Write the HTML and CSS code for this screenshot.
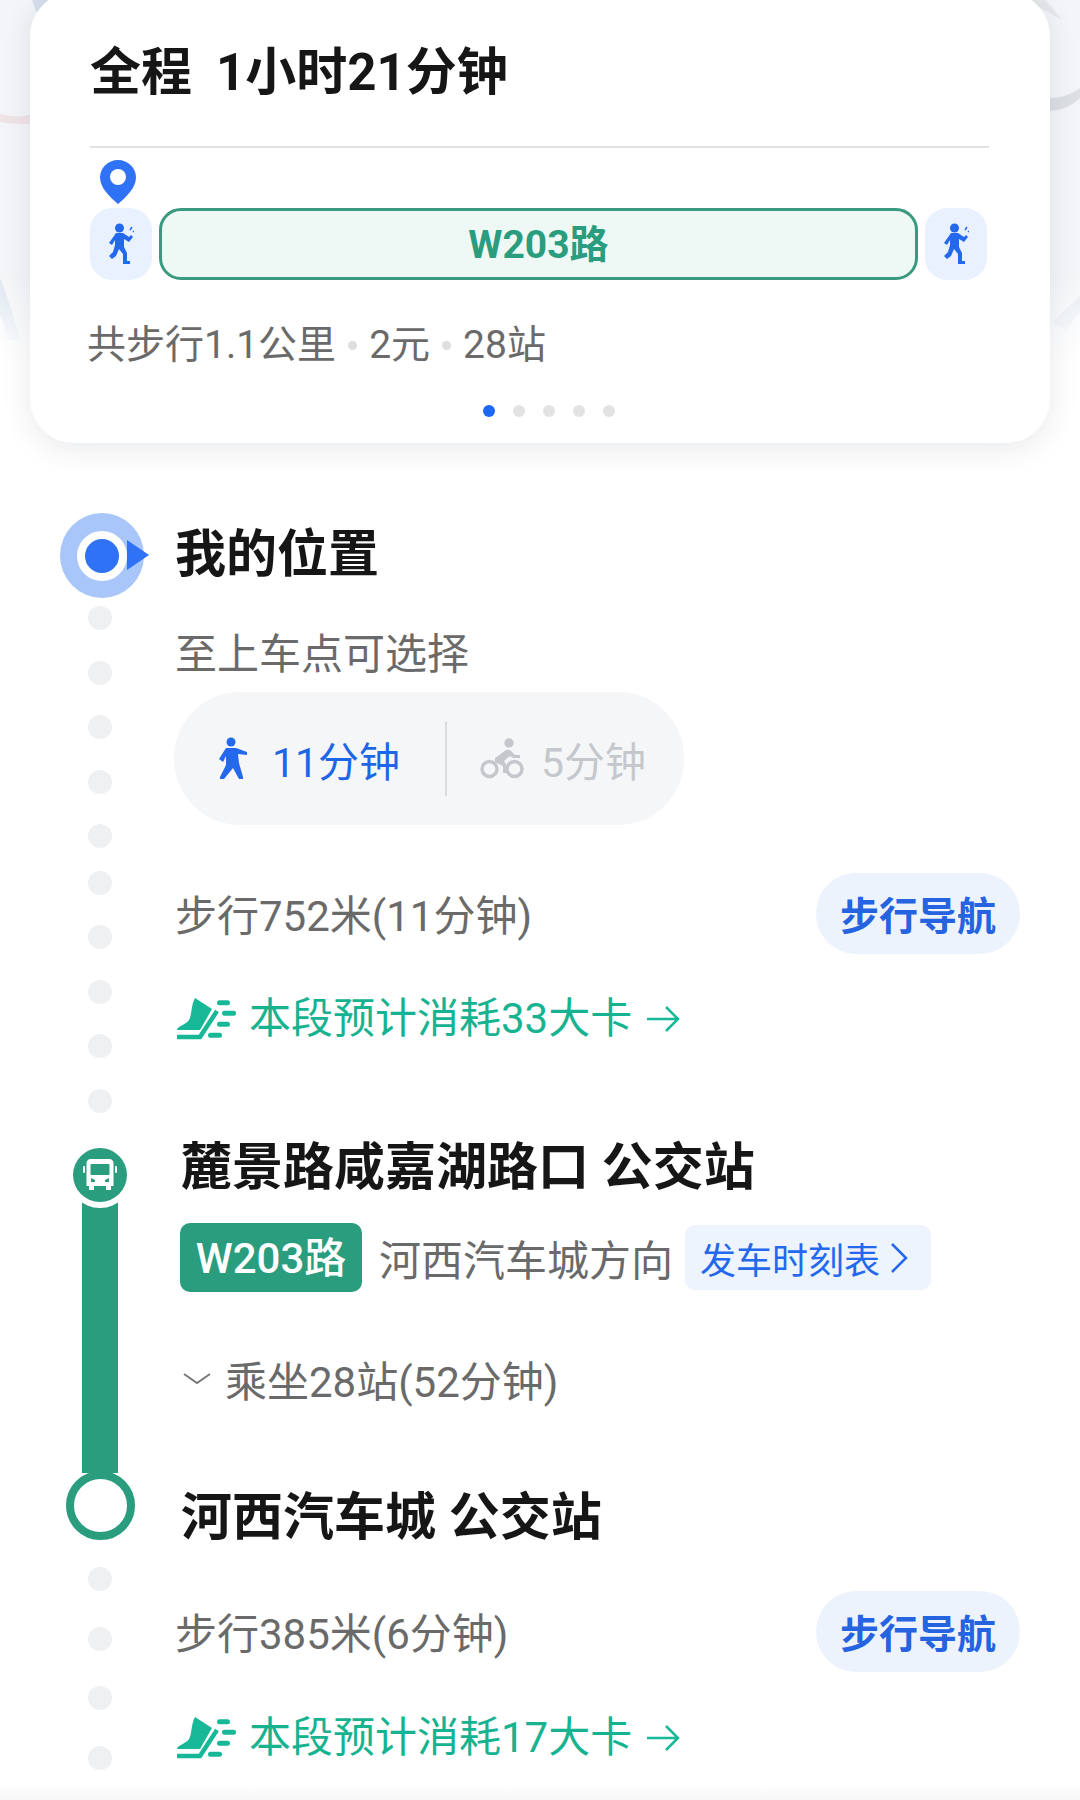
FILE: index.html
```html
<!DOCTYPE html>
<html lang="zh-CN">
<head>
  <meta charset="UTF-8">
  <meta name="viewport" content="width=device-width, initial-scale=1.0">
  <title>公交路线详情</title>
  <link rel="stylesheet" href="styles.css">
</head>
<body>
  <svg class="map-bg" width="1080" height="470" viewBox="0 0 1080 470">
    <defs>
      <linearGradient id="mapFade" x1="0" y1="0" x2="0" y2="1">
        <stop offset="0" stop-color="#fff" stop-opacity="0"/>
        <stop offset="1" stop-color="#fff"/>
      </linearGradient>
    </defs>
    <rect width="1080" height="470" fill="#f3f5f8"/>
    <path d="M0 278 C6 292 14 316 20 340 L8 340 L0 314Z" fill="#dbe4f0"/>
    <path d="M0 114 C12 117 22 117 30 115 V124 C20 124 10 124 0 122Z" fill="#efe3e6"/>
    <path d="M1050 98 C1062 98 1072 94 1080 88 V98 C1072 106 1062 110 1050 111Z" fill="#dcdfe3"/>
    <path d="M1052 322 L1080 296 V312 L1066 330Z" fill="#e3e9f1"/>
    <path d="M32 0 H58 L40 22 Z" fill="#d6dfeb"/>
    <path d="M1026 0 H1046 L1062 20Z" fill="#e6e8eb"/>
    <rect y="270" width="1080" height="90" fill="url(#mapFade)"/>
    <rect y="360" width="1080" height="110" fill="#fff"/>
  </svg>

  <section class="summary-card">
    <h1 class="summary-title"><span>全程</span><span>1小时21分钟</span></h1>
    <div class="summary-line"></div>
    <svg class="pin" width="38" height="46" viewBox="0 0 38 46">
      <path d="M19 1C9 1 1 9 1 18.5C1 29 11 38 19 45C27 38 37 29 37 18.5C37 9 29 1 19 1Z" fill="#3072f6"/>
      <circle cx="19" cy="18" r="8" fill="#fff"/>
    </svg>
    <div class="route-bar">
      <div class="walk-tile">
        <svg width="26" height="42" viewBox="0 0 26 42"><circle cx="11.5" cy="5" r="4.5" fill="#2468ee"/><path d="M8 10H15L21 14L23 12L25 14L21 19L16 16V24L19 30V38H22V41H15V31L11 26L8 33L4 36L1 33L5 29L7 22V17L4 22L1 20Z" fill="#2468ee"/><path d="M22 7L24 4M25 9L26 8" stroke="#2468ee" stroke-width="1.5"/></svg>
      </div>
      <div class="bus-segment">W203路</div>
      <div class="walk-tile">
        <svg width="26" height="42" viewBox="0 0 26 42"><circle cx="11.5" cy="5" r="4.5" fill="#2468ee"/><path d="M8 10H15L21 14L23 12L25 14L21 19L16 16V24L19 30V38H22V41H15V31L11 26L8 33L4 36L1 33L5 29L7 22V17L4 22L1 20Z" fill="#2468ee"/><path d="M22 7L24 4M25 9L26 8" stroke="#2468ee" stroke-width="1.5"/></svg>
      </div>
    </div>
    <div class="summary-meta">
      <span>共步行1.1公里</span><i class="sep"></i><span>2元</span><i class="sep"></i><span>28站</span>
    </div>
    <div class="pager"><i class="on"></i><i></i><i></i><i></i><i></i></div>
  </section>

  <main class="route">
    <section class="leg leg-start">
      <div class="rail">
        <div class="my-marker"><span></span></div>
        <div class="dots">
          <i></i><i></i><i></i><i></i><i></i><i class="tight"></i><i></i><i></i><i></i><i></i>
        </div>
      </div>
      <div class="leg-body">
        <h2 class="stop-name my-name">我的位置</h2>
        <p class="muted choose">至上车点可选择</p>
        <div class="mode-pill">
          <div class="mode mode-on">
            <svg width="30" height="44" viewBox="0 0 30 44"><circle cx="13" cy="5" r="4.5" fill="#2468ee"/><path d="M8 11H18L29 15V18L20 17L21 26L25 40V42H21L15 31L6 42H2V40L8 28V19L5 25L1 22Z" fill="#2468ee"/></svg>
            <span>11分钟</span>
          </div>
          <div class="mode mode-off">
            <svg width="44" height="41" viewBox="0 0 44 41"><circle cx="29" cy="5" r="4.7" fill="#c4c7cc"/><path d="M15 20L26 12Q30 11 32 14L35 17H40V20H33L30 18L24 23L26 26V35H23V28L15 24Z" fill="#c4c7cc"/><circle cx="9.5" cy="31" r="7.5" fill="none" stroke="#c4c7cc" stroke-width="3.5"/><circle cx="34.5" cy="31" r="7.5" fill="none" stroke="#c4c7cc" stroke-width="3.5"/></svg>
            <span>5分钟</span>
          </div>
        </div>
        <div class="walk-row walk-first">
          <span class="muted">步行752米(11分钟)</span>
          <a class="nav-btn">步行导航</a>
        </div>
        <div class="energy energy-first">
          <svg width="60" height="46" viewBox="0 0 60 46"><path d="M18 2L35 13L23 34H0C0 30 9 29 12 24C15 19 14 9 18 2Z" fill="#17b897"/><path d="M0 41H23L40 15" fill="none" stroke="#17b897" stroke-width="4.5"/><path d="M42.5 6.7H50.5M47.5 17.3H56.5M42.5 28.3H50.5M33.5 39.3H42.5" stroke="#17b897" stroke-width="5" stroke-linecap="round"/></svg>
          <span>本段预计消耗33大卡</span>
          <svg width="34" height="30" viewBox="0 0 34 30"><path d="M1 15H32M20 3L32 15L20 27" fill="none" stroke="#17b897" stroke-width="2.5"/></svg>
        </div>
      </div>
    </section>

    <section class="leg leg-bus">
      <div class="rail">
        <div class="bus-marker">
          <svg width="34" height="32" viewBox="0 0 34 32"><path d="M8 0H26Q30.5 0 30.5 4.5V27H28V31H23V27H11V31H6V27H3.5V4.5Q3.5 0 8 0Z" fill="#fff"/><rect x="7.5" y="5" width="19" height="11" rx="1" fill="#2a9d7f"/><path d="M8 19L12 21V23H8ZM26 19L22 21V23H26Z" fill="#2a9d7f"/><rect y="7" width="2" height="7" rx="1" fill="#fff"/><rect x="32" y="7" width="2" height="7" rx="1" fill="#fff"/></svg>
        </div>
        <div class="bus-line"></div>
      </div>
      <div class="leg-body">
        <h2 class="stop-name">麓景路咸嘉湖路口 公交站</h2>
        <div class="line-row">
          <span class="line-badge">W203路</span>
          <span class="muted direction">河西汽车城方向</span>
          <a class="timetable">发车时刻表
            <svg width="18" height="32" viewBox="0 0 18 32"><path d="M2 2L16 16L2 30" fill="none" stroke="#2468ee" stroke-width="2.5"/></svg>
          </a>
        </div>
        <div class="ride-row muted">
          <svg width="30" height="14" viewBox="0 0 30 14"><path d="M2 2L15 11L28 2" fill="none" stroke="#777" stroke-width="2"/></svg>
          <span>乘坐28站(52分钟)</span>
        </div>
      </div>
    </section>

    <section class="leg leg-end">
      <div class="rail">
        <div class="end-ring"></div>
        <div class="dots dots-end"><i></i><i></i><i></i><i></i></div>
      </div>
      <div class="leg-body">
        <h2 class="stop-name">河西汽车城 公交站</h2>
        <div class="walk-row walk-last">
          <span class="muted">步行385米(6分钟)</span>
          <a class="nav-btn">步行导航</a>
        </div>
        <div class="energy energy-last">
          <svg width="60" height="46" viewBox="0 0 60 46"><path d="M18 2L35 13L23 34H0C0 30 9 29 12 24C15 19 14 9 18 2Z" fill="#17b897"/><path d="M0 41H23L40 15" fill="none" stroke="#17b897" stroke-width="4.5"/><path d="M42.5 6.7H50.5M47.5 17.3H56.5M42.5 28.3H50.5M33.5 39.3H42.5" stroke="#17b897" stroke-width="5" stroke-linecap="round"/></svg>
          <span>本段预计消耗17大卡</span>
          <svg width="34" height="30" viewBox="0 0 34 30"><path d="M1 15H32M20 3L32 15L20 27" fill="none" stroke="#17b897" stroke-width="2.5"/></svg>
        </div>
      </div>
    </section>
  </main>

  <div class="bottom-fade"></div>
</body>
</html>
```
FILE: styles.css
```css
* {
  box-sizing: border-box;
}

html, body {
  margin: 0;
  height: 1800px;
  overflow: hidden;
}

body {
  position: relative;
  font-family: Roboto, "Noto Sans CJK SC", sans-serif;
  background: #fff;
  color: #161616;
}

h1, h2, p {
  margin: 0;
}

.map-bg {
  position: absolute;
  left: 0;
  top: 0;
}

.summary-card {
  position: relative;
  width: 1020px;
  height: 451px;
  margin: -8px 0 0 30px;
  padding: 8px 60px 0;
  background: #fff;
  border-radius: 44px;
  box-shadow: 0 6px 30px rgba(30, 40, 60, 0.1);
}

.summary-title {
  display: flex;
  gap: 24px;
  height: 146px;
  font-size: 51px;
  font-weight: 700;
  line-height: 146px;
}

.summary-line {
  width: 899px;
  height: 2px;
  background: #e2e2e2;
}

.pin {
  display: block;
  margin: 11px 0 0 9px;
}

.route-bar {
  display: flex;
  gap: 7px;
  margin-top: 3px;
  height: 72px;
  width: 897px;
}

.walk-tile {
  display: flex;
  align-items: center;
  justify-content: center;
  flex: 0 0 62px;
  background: #e9f1fe;
  border-radius: 22px;
}

.bus-segment {
  flex: 1;
  text-align: center;
  font-size: 39px;
  font-weight: 700;
  line-height: 68px;
  color: #2a9d7f;
  background: #eef9f5;
  border: 3px solid #3a9a7e;
  border-radius: 22px;
}

.summary-meta {
  display: flex;
  align-items: center;
  margin: 35px 0 0 -3px;
  font-size: 39px;
  line-height: 60px;
  color: #6a6a6a;
}

.sep {
  width: 9px;
  height: 9px;
  margin: 0 12px;
  border-radius: 50%;
  background: #dedede;
}

.pager {
  display: flex;
  gap: 18px;
  margin: 30px 0 0 393px;
}

.pager i {
  width: 12px;
  height: 12px;
  border-radius: 50%;
  background: #e3e3e3;
}

.pager i.on {
  background: #1e66f5;
}

.route {
  display: flex;
  flex-direction: column;
  margin-top: 70px;
}

.leg {
  display: flex;
}

.rail {
  display: flex;
  flex-direction: column;
  align-items: center;
  flex: 0 0 84px;
  margin-left: 58px;
  margin-right: 33px;
}

.my-marker {
  position: relative;
  display: flex;
  align-items: center;
  justify-content: center;
  width: 84px;
  height: 85px;
  margin-left: 2px;
  margin-right: -2px;
  border-radius: 50%;
  background: #a9c6fb;
}

.my-marker span {
  width: 50px;
  height: 50px;
  border: 8px solid #fff;
  border-radius: 50%;
  background: #3072f6;
}

.my-marker::after {
  content: "";
  position: absolute;
  left: 67px;
  top: 27px;
  border-left: 22px solid #3072f6;
  border-top: 15px solid transparent;
  border-bottom: 15px solid transparent;
}

.dots {
  display: flex;
  flex-direction: column;
  gap: 30.5px;
  margin-top: 8px;
}

.dots i {
  display: block;
  width: 24px;
  height: 24px;
  border-radius: 50%;
  background: #eff0f2;
}

.dots i.tight {
  margin-top: -8px;
}

.dots-end {
  gap: 35.5px;
  margin-top: 27px;
}

.leg-body {
  flex: 1;
  padding-right: 60px;
}

.stop-name {
  font-size: 51px;
  font-weight: 700;
  line-height: 70px;
  padding-left: 6px;
}

.muted {
  font-size: 42px;
  color: #6a6a6a;
}

.leg-start .my-name {
  padding-left: 0;
  padding-top: 7px;
}

.choose {
  margin-top: 37px;
  line-height: 56px;
}

.mode-pill {
  display: flex;
  align-items: center;
  width: 510px;
  height: 133px;
  margin-top: 9px;
  margin-left: -1px;
  border-radius: 66px;
  background: #f5f6f8;
}

.mode {
  display: flex;
  align-items: center;
  font-size: 41px;
}

.mode-on {
  gap: 24px;
  width: 273px;
  height: 74px;
  padding-left: 44px;
  color: #1f66e6;
  border-right: 2px solid #d9dbdf;
}

.mode-off {
  gap: 17px;
  padding-left: 33px;
  color: #c4c7cc;
}

.walk-row {
  display: flex;
  align-items: center;
  justify-content: space-between;
}

.walk-row .muted {
  padding-bottom: 2px;
}

.walk-first {
  margin-top: 48px;
}

.nav-btn {
  display: flex;
  align-items: center;
  justify-content: center;
  width: 204px;
  height: 81px;
  padding-bottom: 2px;
  border-radius: 40px;
  font-size: 39px;
  font-weight: 700;
  color: #2563e0;
  background: #edf3fd;
}

.energy {
  display: flex;
  align-items: center;
  font-size: 42px;
  line-height: 56px;
  color: #17b391;
}

.energy svg:first-child {
  margin: 0 12px 0 2px;
}

.energy svg:last-child {
  margin-left: 14px;
}

.energy-first {
  margin-top: 37px;
}

.leg-start {
  height: 635px;
}

.leg-bus {
  height: 325px;
}

.bus-marker {
  position: relative;
  display: flex;
  align-items: center;
  justify-content: center;
  flex: 0 0 54px;
  width: 54px;
  border-radius: 50%;
  background: #2a9d7f;
  box-shadow: 0 0 0 6px #fff;
}

.bus-line {
  flex: 1;
  width: 36px;
  margin-top: -6px;
  background: #2a9d7f;
}

.leg-bus .stop-name {
  margin-top: -15px;
}

.line-row {
  display: flex;
  align-items: center;
  margin-top: 20px;
  padding-left: 5px;
}

.line-badge {
  width: 182px;
  height: 69px;
  text-align: center;
  font-size: 42px;
  font-weight: 500;
  line-height: 72px;
  color: #fff;
  background: #2a9d7f;
  border-radius: 10px;
}

.direction {
  margin-left: 17px;
}

.timetable {
  display: flex;
  align-items: center;
  gap: 10px;
  height: 65px;
  margin-left: 12px;
  padding: 0 23px 0 15px;
  font-size: 36px;
  color: #2468ee;
  background: #eef4fd;
  border-radius: 10px;
}

.ride-row {
  display: flex;
  align-items: center;
  gap: 13px;
  margin-top: 56px;
  padding-left: 7px;
}

.end-ring {
  flex: 0 0 69px;
  width: 69px;
  border: 8px solid #2a9d7f;
  border-radius: 50%;
  background: #fff;
}

.leg-end .rail {
  margin-top: -2px;
}

.leg-end .stop-name {
  margin-top: 10px;
}

.walk-last {
  margin-top: 38px;
}

.energy-last {
  margin-top: 38px;
}

.bottom-fade {
  position: absolute;
  left: 0;
  right: 0;
  bottom: 0;
  height: 17px;
  background: linear-gradient(#fff, #f6f6f6);
}
```
